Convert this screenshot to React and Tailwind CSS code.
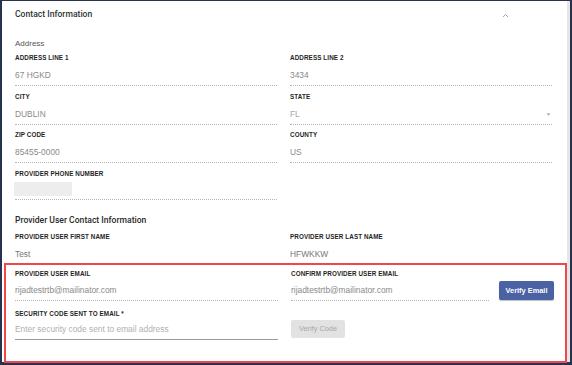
import React from 'react'

const Label = ({ children }) => (
  <div className="h-[8px] text-[6.3px] leading-[8px] font-bold text-[#1f1f1f] uppercase tracking-[0.1px]">{children}</div>
)

const Field = ({ label, value, children, className = '', rowClass = 'mt-[7px] pb-[4px]' }) => (
  <div className={`flex flex-col ${className}`}>
    <Label>{label}</Label>
    <div className={`flex items-center justify-between border-b border-dotted border-[#b5b5b5] ${rowClass}`}>
      {children || <span className="text-[8.4px] leading-[12px] text-[#8a8a8a]">{value}</span>}
    </div>
  </div>
)

const App = () => {
  return (
    <div className="w-[572px] h-[365px] bg-[#27324e] pt-px pl-[2px] pr-[2px] overflow-hidden" style={{ fontFamily: '"Liberation Sans", Arial, sans-serif' }}>
      <div className="h-[361px] bg-white border-r-[3px] border-[#e6e6e6] flex flex-col pl-[13px] pr-[12px]">
        {/* header */}
        <div className="flex items-center justify-between pt-[7px] h-[19px]">
          <span className="text-[8.6px] leading-[12px] text-[#333]" style={{ fontFamily: 'Roboto, "Liberation Sans", sans-serif', fontWeight: 500 }}>Contact Information</span>
          <svg width="7" height="5" viewBox="0 0 7 5" className="mr-[46px] mt-[3px]">
            <path d="M1 4 L3.5 1.5 L6 4" fill="none" stroke="#999" strokeWidth="0.9" />
          </svg>
        </div>

        <div className="mt-[19px] text-[8px] leading-[10px] text-[#555]">Address</div>

        <div className="mt-[5px] grid grid-cols-2 gap-x-[13px] pr-[3px]">
          <Field label="Address Line 1" value="67 HGKD" />
          <Field label="Address Line 2" value="3434" />
          <Field label="City" value="DUBLIN" className="mt-[7px]" />
          <Field label="State" className="mt-[7px]">
            <span className="text-[8.4px] leading-[12px] text-[#aaa]">FL</span>
            <svg width="5" height="3" viewBox="0 0 5 3" className="mr-[1px]">
              <path d="M0.5 0.5 L2.5 2.5 L4.5 0.5 Z" fill="#999" />
            </svg>
          </Field>
          <Field label="Zip Code" value="85455-0000" className="mt-[6px]" />
          <Field label="County" value="US" className="mt-[6px]" />
          <Field label="Provider Phone Number" className="mt-[7px]" rowClass="mt-[4px] pb-[3px]">
            <div className="h-[14px] w-[58px] bg-[#ededed] -ml-px" />
          </Field>
        </div>

        <div className="mt-[14px] text-[8.6px] leading-[12px] text-[#2a2a2a]" style={{ fontFamily: 'Roboto, "Liberation Sans", sans-serif', fontWeight: 500 }}>Provider User Contact Information</div>

        <div className="mt-[7px] grid grid-cols-2 gap-x-[13px] pr-[3px]">
          <div className="flex flex-col">
            <Label>Provider User First Name</Label>
            <div className="mt-[7px] text-[8.4px] leading-[12px] text-[#777]">Test</div>
          </div>
          <div className="flex flex-col">
            <Label>Provider User Last Name</Label>
            <div className="mt-[7px] text-[8.4px] leading-[12px] text-[#777]">HFWKKW</div>
          </div>
        </div>

        {/* highlighted block */}
        <div className="mt-[3px] -ml-[11px] -mr-[12px] border-2 border-[#f0474c] pl-[9px] pr-[11px] pt-[5px] flex-1 mb-[-1px]">
          <div className="grid grid-cols-2 gap-x-[13px]">
            <Field label="Provider User Email" value="rijadtestrtb@mailinator.com" rowClass="mt-[6px] pb-[4px]" />
            <div className="flex items-start gap-[10px]">
              <Field label="Confirm Provider User Email" value="rijadtestrtb@mailinator.com" className="flex-1" rowClass="mt-[6px] pb-[4px]" />
              <button className="mt-[11px] h-[19px] w-[55px] rounded-[2px] bg-[#4a62a4] text-white text-[7.4px] font-bold shadow-[0_1px_1px_rgba(0,0,0,0.25)]">Verify Email</button>
            </div>
            <div className="mt-[9px] flex flex-col">
              <Label>Security Code Sent To Email *</Label>
              <div className="mt-[5px] border-b border-[#9a9a9a] pb-[4px] text-[8.4px] leading-[12px] text-[#b0b0b0]">
                Enter security code sent to email address
              </div>
            </div>
            <div className="mt-[19px] flex items-start">
              <button className="h-[18px] w-[54px] rounded-[2px] bg-[#e2e2e2] text-[#a8a8a8] text-[7.4px]">Verify Code</button>
            </div>
          </div>
        </div>
      </div>
    </div>
  )
}

export default App
